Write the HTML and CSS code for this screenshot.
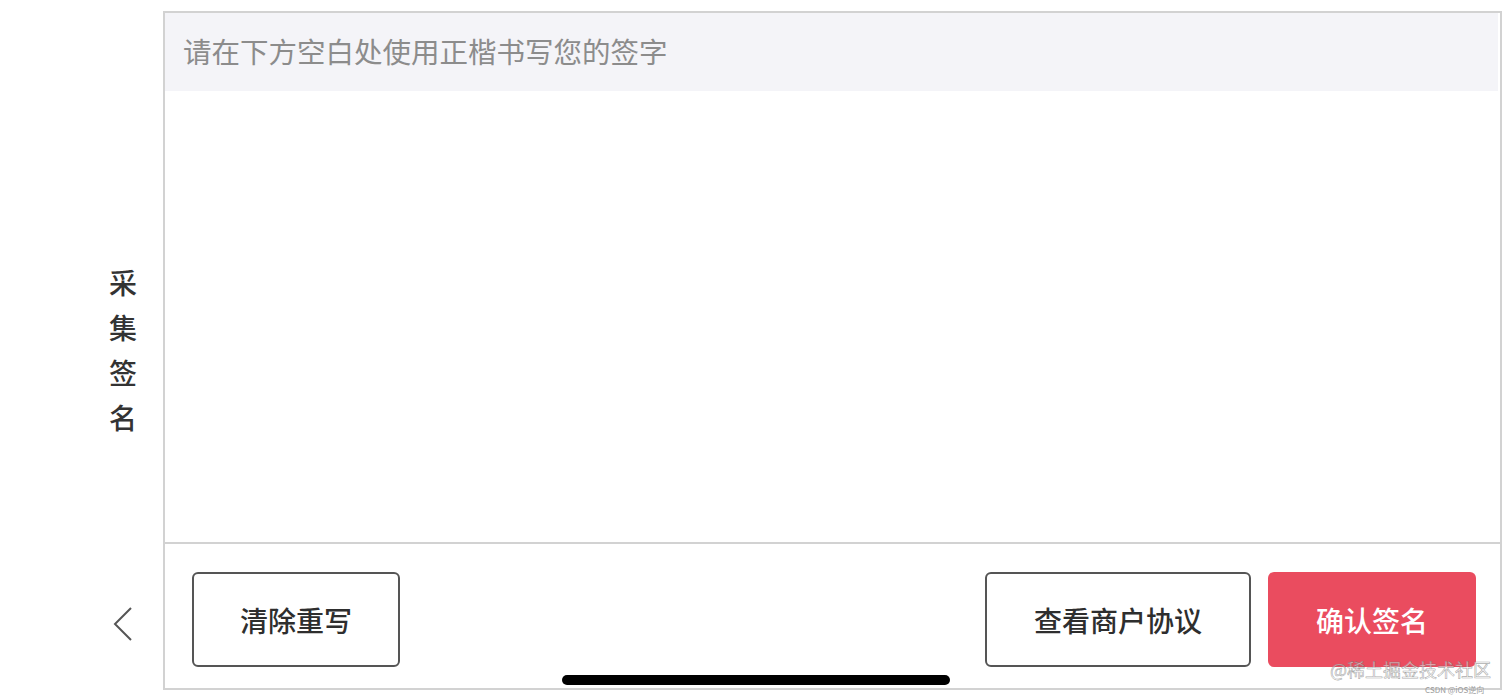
FILE: index.html
```html
<!DOCTYPE html>
<html lang="zh-CN">
<head>
<meta charset="utf-8">
<title>采集签名</title>
<link rel="stylesheet" href="styles.css">
</head>
<body>
<div class="page">
  <aside class="side">
    <div class="side-title"><span>采</span><span>集</span><span>签</span><span>名</span></div>
    <button class="back" aria-label="返回">
      <svg width="22" height="36" viewBox="0 0 22 36"><polyline points="19,2 3,18 19,34" fill="none" stroke="#555" stroke-width="2"/></svg>
    </button>
  </aside>
  <section class="frame">
    <div class="hint">请在下方空白处使用正楷书写您的签字</div>
    <div class="canvas"></div>
    <div class="actions">
      <button class="btn btn-outline btn-clear">清除重写</button>
      <div class="spacer"></div>
      <button class="btn btn-outline btn-agree">查看商户协议</button>
      <button class="btn btn-primary">确认签名</button>
    </div>
  </section>
  <div class="home-indicator"></div>
  <div class="watermark">@稀土掘金技术社区</div>
  <div class="watermark-small">CSDN @iOS逆向</div>
</div>
</body>
</html>
```
FILE: styles.css
```css
* { box-sizing: border-box; }
html, body { margin: 0; padding: 0; background: #fff; }
body { font-family: "Noto Sans CJK SC", "Noto Sans", sans-serif; }
.page {
  position: relative;
  width: 1512px;
  height: 699px;
  display: flex;
  overflow: hidden;
}
.side {
  width: 163px;
  flex: none;
  display: flex;
  flex-direction: column;
  align-items: flex-start;
  padding-top: 260px;
  padding-left: 109px;
}
.side-title {
  display: flex;
  flex-direction: column;
  font-size: 28px;
  font-weight: 500;
  line-height: 45px;
  color: #333;
}
.back {
  margin-top: auto;
  margin-bottom: 57px;
  margin-left: 3px;
  padding: 0;
  border: 0;
  background: none;
  width: 22px;
  height: 36px;
  display: block;
}
.back svg { display: block; }
.frame {
  margin-top: 11px;
  width: 1339px;
  height: 679px;
  border: 2px solid #d2d2d2;
  display: flex;
  flex-direction: column;
}
.hint {
  height: 78px;
  background: #f4f4f8;
  color: #8c8c8c;
  font-size: 28.5px;
  line-height: 76px;
  padding-left: 18px;
  margin-right: 2px;
}
.canvas {
  flex: 1;
  background: #fff;
  border-bottom: 2px solid #d2d2d2;
}
.actions {
  height: 144px;
  flex: none;
  display: flex;
  align-items: flex-start;
  padding: 28px 24px 0 27px;
  gap: 17px;
}
.spacer { flex: 1; }
.btn {
  height: 95px;
  border-radius: 6px;
  font-family: "Noto Sans CJK SC", sans-serif;
  font-size: 28px;
  font-weight: 500;
  padding: 0;
  cursor: pointer;
}
.btn-outline {
  background: #fff;
  border: 2px solid #555;
  color: #2e2e2e;
}
.btn-clear { width: 208px; }
.btn-agree { width: 266px; }
.btn-primary {
  width: 208px;
  background: #ea4c5f;
  border: 0;
  color: #fff;
}
.home-indicator {
  position: absolute;
  left: 562px;
  top: 675px;
  width: 388px;
  height: 10px;
  border-radius: 5px;
  background: #000;
}
.watermark {
  position: absolute;
  left: 1330px;
  top: 656px;
  font-size: 18px;
  line-height: 26px;
  color: rgba(255, 255, 255, 0.55);
  -webkit-text-stroke: 0.6px rgba(110, 110, 110, 0.6);
  white-space: nowrap;
}
.watermark-small {
  position: absolute;
  left: 1425px;
  top: 684px;
  font-size: 8px;
  line-height: 12px;
  color: #9a9a9a;
  white-space: nowrap;
}
```
